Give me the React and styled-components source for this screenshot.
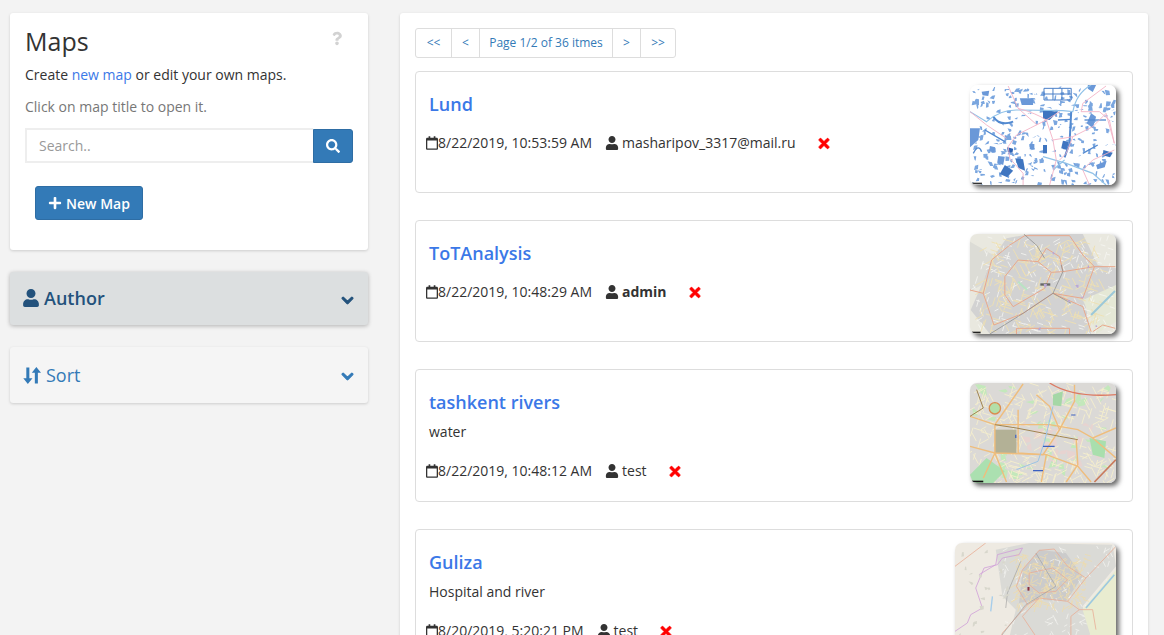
import React from 'react';
import styled, { createGlobalStyle } from 'styled-components';
import { FaChevronDown, FaPlus, FaQuestion, FaRegCalendar, FaSearch, FaTimes, FaUser } from 'react-icons/fa';

const GlobalStyle = createGlobalStyle`
  html, body {
    margin: 0;
    height: 635px;
    overflow: hidden;
    background: #f3f3f3;
    color: #333;
    font-family: "Open Sans", "Liberation Sans", sans-serif;
    font-size: 14px;
    line-height: 20px;
  }
`;

const Page = styled.div`
  display: grid;
  grid-template-columns: 358px 748px;
  column-gap: 32px;
  padding: 13px 0 0 10px;
  align-items: start;
`;

const Sidebar = styled.aside`
  display: flex;
  flex-direction: column;
  gap: 22px;
`;

const InfoPanel = styled.section`
  position: relative;
  height: 237px;
  box-sizing: border-box;
  padding: 13px 15px 0;
  background: #fff;
  border-radius: 3px;
  box-shadow: 0 1px 3px rgba(0, 0, 0, 0.16);
`;

const PanelTitle = styled.h2`
  margin: 0 0 9px;
  font-size: 25px;
  line-height: 30px;
  font-weight: 400;
  color: #333;
`;

const HelpMark = styled(FaQuestion)`
  position: absolute;
  top: 18px;
  right: 26px;
  width: 10px;
  height: 15px;
  color: #d2d2d2;
`;

const Line = styled.p`
  margin: 0 0 12px;
  color: ${({ $muted }) => ($muted ? '#777' : '#333')};
`;

const InlineLink = styled.a`
  color: #3b78e7;
`;

const SearchRow = styled.div`
  display: flex;
  width: 328px;
  margin-top: -1px;
  align-items: center;
`;

const SearchInput = styled.input`
  flex: 1;
  min-width: 0;
  height: 35px;
  box-sizing: border-box;
  padding: 0 12px;
  border: 2px solid #eee;
  border-right-width: 0;
  outline: none;
  background: #fff;
  font: inherit;
  &::placeholder { color: #999; opacity: 1; }
`;

const SearchButton = styled.button`
  display: flex;
  width: 40px;
  height: 34px;
  align-items: center;
  justify-content: center;
  padding: 0;
  border: 1px solid #2e6da4;
  border-radius: 0 3px 3px 0;
  background: #337ab7;
  color: #fff;
  font-size: 14px;
`;

const NewMapButton = styled.button`
  display: flex;
  width: 108px;
  height: 34px;
  margin: 23px 0 0 10px;
  align-items: center;
  justify-content: center;
  gap: 4px;
  padding: 0;
  border: 1px solid #2e6da4;
  border-radius: 3px;
  background: #337ab7;
  color: #fff;
  font: 600 14px "Open Sans", sans-serif;
  svg { font-size: 14px; }
`;

const FilterHeader = styled.div`
  display: flex;
  height: ${({ $active }) => ($active ? '53px' : '56px')};
  box-sizing: border-box;
  align-items: center;
  padding: 0 14px ${({ $active }) => ($active ? '2px' : '0')} 12px;
  border-radius: 3px;
  background: ${({ $active }) => ($active ? '#dcdfe0' : '#f5f5f5')};
  color: ${({ $active }) => ($active ? '#23527c' : '#337ab7')};
  box-shadow: ${({ $active }) =>
    $active ? '0 1px 4px rgba(0, 0, 0, 0.28)' : '0 1px 3px rgba(0, 0, 0, 0.16)'};
  font-size: 18px;
  svg { flex: none; }
`;

const FilterLabel = styled.span`
  flex: 1;
  margin-left: 4px;
  font-weight: ${({ $active }) => ($active ? 600 : 500)};
`;

const Chevron = styled(FaChevronDown)`
  width: 13px;
  height: 13px;
  margin-top: ${({ $drop }) => $drop}px;
  stroke: currentColor;
  stroke-width: 40px;
`;

const SortGlyph = styled.svg`
  width: 18px;
  height: 19px;
  margin: 0 1px 0 1px;
  fill: currentColor;
`;

const Content = styled.main`
  height: 640px;
  box-sizing: border-box;
  padding: 15px 15px 0;
  background: #fff;
  border-radius: 3px;
  box-shadow: 0 1px 3px rgba(0, 0, 0, 0.16);
`;

const Pager = styled.nav`
  display: inline-flex;
  height: 30px;
  margin-bottom: 13px;
  box-sizing: border-box;
  border: 1px solid #ddd;
  border-radius: 3px;
  vertical-align: top;
`;

const PagerItem = styled.a`
  display: flex;
  width: ${({ $width }) => $width}px;
  align-items: center;
  justify-content: center;
  box-sizing: border-box;
  color: #337ab7;
  font-size: 12px;
  & + & { border-left: 1px solid #ddd; }
`;

const CardList = styled.div`
  display: flex;
  flex-direction: column;
  gap: 27px;
`;

const Card = styled.article`
  display: flex;
  min-height: 122px;
  box-sizing: border-box;
  padding: 13px 16px 7px 10px;
  border: 1px solid #ddd;
  border-radius: 4px;
`;

const CardBody = styled.div`
  flex: 1;
  min-width: 0;
`;

const CardTitle = styled.a`
  display: block;
  margin: 7px 0 0 3px;
  font-size: 18px;
  line-height: 24px;
  font-weight: 600;
  color: #3b78e7;
`;

const CardNote = styled.p`
  margin: 8px 0 0 3px;
  height: 22px;
  line-height: 20px;
`;

const MetaRow = styled.div`
  display: flex;
  align-items: center;
  height: 20px;
  margin: 17px 0 13px;
`;

const CalendarIcon = styled(FaRegCalendar)`
  width: 12px;
  height: 14px;
  flex: none;
  color: #333;
`;

const UserIcon = styled(FaUser)`
  width: 14px;
  height: 14px;
  flex: none;
  margin: 0 3px 0 13px;
  color: #333;
`;

const AuthorName = styled.span`
  font-weight: ${({ $strong }) => ($strong ? 700 : 400)};
`;

const RemoveIcon = styled(FaTimes)`
  width: 14px;
  height: 15px;
  flex: none;
  margin-left: 21px;
  color: #f00;
  stroke: currentColor;
  stroke-width: 25px;
`;

const Thumb = styled.div`
  flex: none;
  width: ${({ $width }) => $width}px;
  height: ${({ $height }) => $height}px;
  overflow: hidden;
  border-radius: 7px;
  box-shadow: 3px 3px 5px rgba(0, 0, 0, 0.6);
  svg { display: block; width: 100%; height: 100%; filter: blur(0.5px); }
`;

// small repeatable random so the thumbnails stay the same on every load
const seeded = (seed) => {
  let s = seed * 7919;
  return () => {
    s = (s * 16807) % 2147483647;
    return s / 2147483647;
  };
};

const streets = (seed, count, x, y, w, h, len) => {
  const r = seeded(seed);
  let d = '';
  for (let i = 0; i < count; i += 1) {
    const a = x + r() * w;
    const b = y + r() * h;
    const t = Math.floor(r() * 4) * 0.78 + 0.3;
    const l = len * (0.6 + r() * 0.8);
    d += `M${a.toFixed(0)} ${b.toFixed(0)}l${(Math.cos(t) * l).toFixed(0)} ${(Math.sin(t) * l).toFixed(0)}`;
  }
  return d;
};

const specks = (seed, count, x, y, w, h, size) => {
  const r = seeded(seed);
  let d = '';
  for (let i = 0; i < count; i += 1) {
    const s = () => (3 + r() * size).toFixed(0);
    const n = () => ((r() - 0.5) * size * 0.7).toFixed(0);
    d += `M${(x + r() * w).toFixed(0)} ${(y + r() * h).toFixed(0)}l${s()} ${n()}l${n()} ${s()}l-${s()} ${n()}z`;
  }
  return d;
};

const LundMap = () => (
  <svg viewBox="60 45 440 300" preserveAspectRatio="none">
    <rect x="60" y="45" width="440" height="300" fill="#fff" />
    <path d={specks(11, 290, 65, 50, 430, 290, 11)} fill="#7aa6df" />
    <g fill="#6a98d8">
      <path d="M210 85H250V105H216Z" />
      <path d="M60 175H90L85 210L60 232Z" />
      <path d="M280 120L325 125L300 150L280 146Z" fill="#3f75c0" />
      <path d="M415 45H440L430 66L415 56Z" />
      <path d="M280 225H292V250H280Z" fill="#3f75c0" />
      <path d="M196 265L220 268L226 302L206 294Z" fill="#3f75c0" />
      <path d="M165 285L190 302L172 322L150 312Z" fill="#3f75c0" />
      <path d="M340 212L358 215L352 240L335 235Z" fill="#3f75c0" />
      <path d="M120 228L136 232L134 248L118 244Z" />
      <path d="M145 258L165 260L160 285L142 278Z" />
      <path d="M172 232L190 236L188 248L174 246Z" fill="#2a5fb0" />
      <path d="M240 222H254V238H240Z" />
      <path d="M440 285L472 272L466 292L444 298Z" />
      <path d="M462 240L490 248L482 262L460 256Z" fill="#3f75c0" />
      <path d="M95 65L118 62L115 78L98 76Z" />
      <path d="M425 130L440 140L430 175L412 160Z" />
    </g>
    <g fill="none" stroke="#5289d0" strokeWidth="6">
      <path d="M130 140Q150 170 190 155" />
      <path d="M365 125L360 220L345 262" />
      <path d="M405 150L470 150" strokeWidth="4" />
      <path d="M325 150L365 148" strokeWidth="4" />
      <path d="M70 250Q85 220 95 245" strokeWidth="4" />
      <path d="M105 180L165 215" strokeWidth="4" />
      <path d="M400 250L445 225" strokeWidth="4" />
    </g>
    <g fill="none" stroke="#90c2e8" strokeWidth="3.5">
      <path d="M60 125L110 155Q150 118 205 120L340 122L370 125Q380 70 425 45" />
      <path d="M280 260L350 280L430 310L470 345" />
      <path d="M345 270L310 300" />
    </g>
    <path d="M283 55H365V90H283ZM310 55V90M337 55V90M283 72H365" fill="none" stroke="#4a80c8" strokeWidth="3" />
    <g fill="none" stroke="#f2b0c4" strokeWidth="2.6">
      <path d="M175 48L205 115L262 165" />
      <path d="M205 115Q260 130 290 150L330 125" />
      <path d="M290 150Q240 175 200 195L175 230L180 265L220 310L220 345" />
      <path d="M290 150L310 210L320 270L300 345" />
      <path d="M310 210L370 200L430 170L470 130L495 220" />
      <path d="M370 200L350 250L330 270" />
      <path d="M470 48L400 100L395 125L450 125L480 150L495 220" />
      <path d="M420 345L400 300L430 270L495 240" />
      <path d="M60 125L110 165L170 205" />
    </g>
    <rect x="66" y="338" width="30" height="5" fill="#333" />
  </svg>
);

const CityMap = () => (
  <svg viewBox="60 27 440 300" preserveAspectRatio="none">
    <rect x="60" y="27" width="440" height="300" fill="#e9e8df" />
    <path d="M120 110L170 40L240 27H400L445 120L500 130V200L405 225L425 327H120L62 255L95 180Z" fill="#d2d2d2" />
    <path d="M60 50L130 90L95 180L60 200Z" fill="#dcdcd6" />
    <path d="M400 225L500 180V290L440 327L425 280Z" fill="#e5e8d6" />
    <path d={streets(71, 170, 70, 30, 420, 290, 18)} fill="none" stroke="#f6f6f2" strokeWidth="2.4" />
    <path d={streets(29, 230, 100, 40, 350, 280, 28)} fill="none" stroke="#efe0b0" strokeWidth="2.6" />
    <g fill="none" stroke="#e8a88c" strokeWidth="3">
      <path d="M165 155L205 105L265 110L305 142L340 140L330 95L290 70L265 110" />
      <path d="M125 105L100 205L132 300L220 265L310 205L400 245L425 320" />
      <path d="M125 105L180 60L225 32H360L400 90L435 125L400 220L310 205" />
      <path d="M165 155L165 210L190 245L285 190L305 142" />
      <path d="M60 195L100 205M340 140L435 125L498 125M430 320L460 300L498 310M200 327V310H360V327" />
    </g>
    <path d="M222 27L262 62L285 100M120 327L220 265L310 205L340 140L335 120M310 205L365 235" fill="none" stroke="#8a8a8a" strokeWidth="2.2" />
    <path d="M425 270L497 198" fill="none" stroke="#9cc8d8" strokeWidth="6" />
    <path d="M205 170L232 195" fill="none" stroke="#b9e3c3" strokeWidth="6" />
    <rect x="272" y="175" width="30" height="7" fill="#666" />
    <path d={specks(8, 8, 160, 30, 300, 280, 7)} fill="#b9a7d6" />
    <rect x="66" y="320" width="26" height="5" fill="#222" />
  </svg>
);

const TashkentMap = () => (
  <svg viewBox="60 25 440 300" preserveAspectRatio="none">
    <rect x="60" y="25" width="440" height="300" fill="#dbd9d6" />
    <path d={specks(17, 44, 60, 25, 430, 290, 24)} fill="#c3e8bb" />
    <path d={specks(43, 24, 200, 140, 240, 120, 22)} fill="#e7d3d0" />
    <path d={streets(53, 300, 60, 25, 440, 300, 26)} fill="none" stroke="#f6efcc" strokeWidth="2.6" />
    <path d="M135 165H200V235H135Z" fill="#b3b196" />
    <path d="M310 60L340 50L335 95L310 92Z" fill="#a5d7a6" />
    <path d="M60 300L110 250L165 290L130 325H70Z" fill="#abe0b0" />
    <path d="M420 190L470 200L465 250L430 240Z" fill="#a9dfad" />
    <circle cx="135" cy="101" r="17" fill="#b3dfa8" stroke="#d98d4f" strokeWidth="4" />
    <g fill="none" stroke="#efbd7c" strokeWidth="4.2">
      <path d="M60 125L135 150L300 150L385 165L430 190L500 160" />
      <path d="M135 150L135 235L100 310" />
      <path d="M220 28L170 100L135 150" />
      <path d="M205 105V235L280 240L330 165L375 80V30" />
      <path d="M60 215L135 235L290 240L385 275L425 322" />
      <path d="M380 195L385 270L350 322" />
      <path d="M260 60L300 95L330 165M430 190L500 250" />
      <path d="M170 322L135 235M290 240L275 322" />
    </g>
    <path d="M80 45L100 100L60 125M135 150L200 160L330 185L385 195" fill="none" stroke="#a08450" strokeWidth="3" />
    <path d="M300 25Q370 70 500 60" fill="none" stroke="#dc7a63" strokeWidth="4" />
    <path d="M435 322L500 255" fill="none" stroke="#c97a5b" strokeWidth="5" />
    <path d="M310 95L285 200L265 260L200 285" fill="none" stroke="#9cc4e4" strokeWidth="3" />
    <path d="M365 121H378M280 215H315M250 288H280M198 180V190" stroke="#3a5fc0" strokeWidth="3.5" />
    <rect x="66" y="318" width="34" height="5" fill="#111" />
  </svg>
);

const GulizaMap = () => (
  <svg viewBox="48 40 482 330" preserveAspectRatio="none">
    <rect x="48" y="40" width="482" height="330" fill="#eeeae2" />
    <path d="M170 60L270 40L520 45L530 110L430 230L470 370H200L230 240L190 200Z" fill="#dadad6" />
    <path d="M250 120L300 60L380 70L430 140L380 215L300 210L240 220Z" fill="#cbcbcb" />
    <path d={streets(91, 120, 180, 45, 340, 320, 16)} fill="none" stroke="#f8f8f4" strokeWidth="2" />
    <path d={streets(37, 260, 230, 70, 210, 160, 18)} fill="none" stroke="#efdcaa" strokeWidth="2.2" />
    <path d="M430 240L530 120V370H470Z" fill="#e9ecd0" />
    <g fill="none" stroke="#e8ae96" strokeWidth="2.4">
      <path d="M300 62L345 58L385 110L440 145L385 215L300 205L265 225L232 170L250 120Z" />
      <path d="M270 130L340 115L385 150L350 185L300 190L270 165Z" />
      <path d="M385 215L420 240L395 260L395 340M265 225L190 310L170 370" />
      <path d="M300 205L250 260L290 320M420 240L460 240L470 300" />
      <path d="M48 110L140 40M440 145L530 50" />
    </g>
    <path d="M120 135L170 105L175 75L250 55L240 75L190 85L175 105L135 115L110 175L130 235L95 255L85 280L48 305" fill="none" stroke="#cf9fd8" strokeWidth="2.4" />
    <path d="M245 95L205 190L200 235M290 70L350 170L260 225L150 365" fill="none" stroke="#9a9a9a" strokeWidth="1.800" />
    <path d="M440 235L525 135" fill="none" stroke="#9cc8e0" strokeWidth="5" />
    <path d="M160 200L155 245" fill="none" stroke="#a6cdea" strokeWidth="4" />
    <rect x="265" y="172" width="6" height="11" fill="#8a3040" />
    <path d={specks(63, 22, 60, 60, 150, 280, 10)} fill="#d8d7cc" />
  </svg>
);

const SortIcon = () => (
  <SortGlyph viewBox="0 0 19 19">
    <path d="M3.500 1h3.200v11.500H10L5.100 18.400 0.300 12.500h3.200z" />
    <path d="M12.500 18h3.200V6.500H19L14.100 0.600 9.300 6.500h3.200z" />
  </SortGlyph>
);

const maps = [
  { title: 'Lund', date: '8/22/2019, 10:53:59 AM', author: 'masharipov_3317@mail.ru', Map: LundMap, width: 146, height: 100 },
  { title: 'ToTAnalysis', date: '8/22/2019, 10:48:29 AM', author: 'admin', strong: true, Map: CityMap, width: 146, height: 100 },
  { title: 'tashkent rivers', note: 'water', date: '8/22/2019, 10:48:12 AM', author: 'test', Map: TashkentMap, width: 146, height: 100 },
  { title: 'Guliza', note: 'Hospital and river', date: '8/20/2019, 5:20:21 PM', author: 'test', Map: GulizaMap, width: 161, height: 110 },
];

const App = () => (
  <>
    <GlobalStyle />
    <Page>
      <Sidebar>
        <InfoPanel>
          <PanelTitle>Maps</PanelTitle>
          <HelpMark />
          <Line>
            Create <InlineLink>new map</InlineLink> or edit your own maps.
          </Line>
          <Line $muted>Click on map title to open it.</Line>
          <SearchRow>
            <SearchInput placeholder="Search.." />
            <SearchButton aria-label="Search">
              <FaSearch />
            </SearchButton>
          </SearchRow>
          <NewMapButton>
            <FaPlus />
            New Map
          </NewMapButton>
        </InfoPanel>
        <FilterHeader $active>
          <FaUser size={18} />
          <FilterLabel $active>Author</FilterLabel>
          <Chevron $drop={6} />
        </FilterHeader>
        <FilterHeader>
          <SortIcon />
          <FilterLabel>Sort</FilterLabel>
          <Chevron $drop={2} />
        </FilterHeader>
      </Sidebar>
      <Content>
        <Pager>
          <PagerItem $width={35}>&lt;&lt;</PagerItem>
          <PagerItem $width={28}>&lt;</PagerItem>
          <PagerItem $width={133}>Page 1/2 of 36 itmes</PagerItem>
          <PagerItem $width={28}>&gt;</PagerItem>
          <PagerItem $width={35}>&gt;&gt;</PagerItem>
        </Pager>
        <CardList>
          {maps.map(({ title, note, date, author, strong, Map, width, height }) => (
            <Card key={title}>
              <CardBody>
                <CardTitle>{title}</CardTitle>
                {note && <CardNote>{note}</CardNote>}
                <MetaRow>
                  <CalendarIcon />
                  <span>{date}</span>
                  <UserIcon />
                  <AuthorName $strong={strong}>{author}</AuthorName>
                  <RemoveIcon />
                </MetaRow>
              </CardBody>
              <Thumb $width={width} $height={height}>
                <Map />
              </Thumb>
            </Card>
          ))}
        </CardList>
      </Content>
    </Page>
  </>
);

export default App;
